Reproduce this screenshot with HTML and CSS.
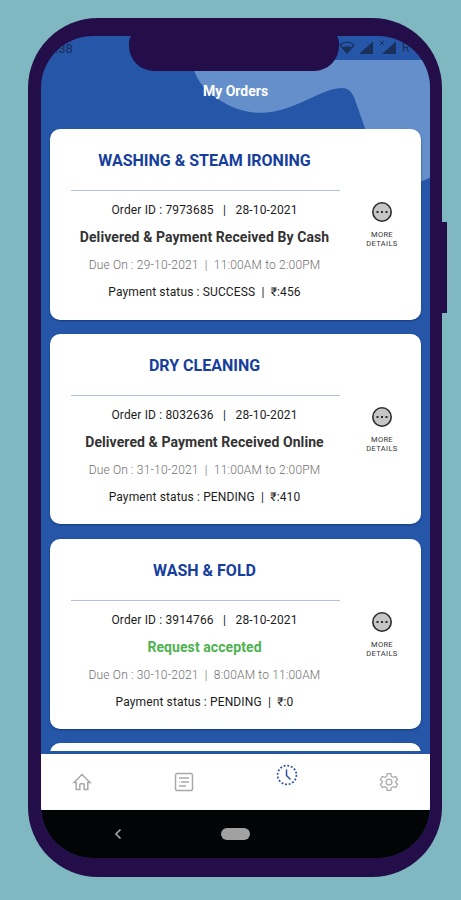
FILE: index.html
```html
<!DOCTYPE html>
<html lang="en">
<head>
    <meta charset="UTF-8">
    <title>My Orders</title>
    <link rel="stylesheet" href="styles.css">
</head>

<body>

<div class="phone">

    <div class="sideButton"></div>
    <div class="notch"></div>

    <div class="screen">

        <svg class="wave" width="389" height="160" viewBox="0 0 389 160">
            <path fill="#658fca" d="M150 24 C154 42 162 54 180 65 C204 80 228 80 254 69 C274 61 288 52 301 52 Q309 52 313 61 L325 95 V146 H378 Q384 144.500 389 141.500 V24 Z"/>
        </svg>

        <div class="statusbar">
            <span class="time">:38</span>
            <svg class="signals" width="62" height="16" viewBox="0 0 62 16">
                <path fill="none" stroke="#1a2f5a" stroke-width="1.2" d="M1 5 Q8 -1 15 5 L8 13 Z"/>
                <path fill="#1a2f5a" d="M3.500 7.500 Q8 5 12.500 7.500 L8 13 Z M20 14 L34 1.500 V14 Z M43 14 L57 1.500 V14 Z"/>
                <path fill="none" stroke="#1a2f5a" stroke-width="1" d="M41 1 L45 5 M45 1 L41 5"/>
            </svg>
            <span class="roaming">R</span>
        </div>

        <h1 class="header">My Orders</h1>

        <div class="orders">

            <div class="card">
                <div class="info">
                    <h2 class="service">WASHING &amp; STEAM IRONING</h2>
                    <p class="orderId">Order ID : 7973685 &nbsp; | &nbsp; 28-10-2021</p>
                    <p class="state">Delivered &amp; Payment Received By Cash</p>
                    <p class="due">Due On : 29-10-2021 &nbsp;|&nbsp; 11:00AM to 2:00PM</p>
                    <p class="payment">Payment status : SUCCESS &nbsp;|&nbsp; ₹:456</p>
                </div>
                <div class="more">
                    <svg width="22" height="22" viewBox="0 0 22 22">
                        <circle cx="11" cy="11" r="9.200" fill="#c6c6c6" stroke="#2b2b2b" stroke-width="1.600"/>
                        <path fill="#2b2b2b" d="M5.500 10h2v2h-2z M10 10h2v2h-2z M14.500 10h2v2h-2z"/>
                    </svg>
                    <span>MORE<br>DETAILS</span>
                </div>
            </div>

            <div class="card">
                <div class="info">
                    <h2 class="service">DRY CLEANING</h2>
                    <p class="orderId">Order ID : 8032636 &nbsp; | &nbsp; 28-10-2021</p>
                    <p class="state">Delivered &amp; Payment Received Online</p>
                    <p class="due">Due On : 31-10-2021 &nbsp;|&nbsp; 11:00AM to 2:00PM</p>
                    <p class="payment">Payment status : PENDING &nbsp;|&nbsp; ₹:410</p>
                </div>
                <div class="more">
                    <svg width="22" height="22" viewBox="0 0 22 22">
                        <circle cx="11" cy="11" r="9.200" fill="#c6c6c6" stroke="#2b2b2b" stroke-width="1.600"/>
                        <path fill="#2b2b2b" d="M5.500 10h2v2h-2z M10 10h2v2h-2z M14.500 10h2v2h-2z"/>
                    </svg>
                    <span>MORE<br>DETAILS</span>
                </div>
            </div>

            <div class="card">
                <div class="info">
                    <h2 class="service">WASH &amp; FOLD</h2>
                    <p class="orderId">Order ID : 3914766 &nbsp; | &nbsp; 28-10-2021</p>
                    <p class="state accepted">Request accepted</p>
                    <p class="due">Due On : 30-10-2021 &nbsp;|&nbsp; 8:00AM to 11:00AM</p>
                    <p class="payment">Payment status : PENDING &nbsp;|&nbsp; ₹:0</p>
                </div>
                <div class="more">
                    <svg width="22" height="22" viewBox="0 0 22 22">
                        <circle cx="11" cy="11" r="9.200" fill="#c6c6c6" stroke="#2b2b2b" stroke-width="1.600"/>
                        <path fill="#2b2b2b" d="M5.500 10h2v2h-2z M10 10h2v2h-2z M14.500 10h2v2h-2z"/>
                    </svg>
                    <span>MORE<br>DETAILS</span>
                </div>
            </div>

            <div class="card"></div>

        </div>

        <div class="tabs">
            <div class="tab">
                <svg width="20" height="20" viewBox="0 0 20 20">
                    <path d="M2 10.500 L10 2.500 L18 10.500 H15.800 V17.500 H12.200 V12.800 Q12.200 11.800 11.200 11.800 H8.800 Q7.800 11.800 7.800 12.800 V17.500 H4.200 V10.500 Z"/>
                </svg>
            </div>
            <div class="tab">
                <svg width="20" height="20" viewBox="0 0 20 20">
                    <rect x="1.500" y="1.500" width="17" height="17" rx="1.800"/>
                    <path d="M5 6 H15 M7 10 H15 M5 10 H5.600 M5 14 H12"/>
                </svg>
            </div>
            <div class="tab active">
                <svg width="22" height="22" viewBox="0 0 22 22">
                    <circle cx="11" cy="11" r="9.400" stroke-width="1.700" stroke-dasharray="1.900 1.792"/>
                    <path d="M10.500 5.500 V11.500 L14.500 15.500"/>
                </svg>
            </div>
            <div class="tab">
                <svg width="20" height="20" viewBox="0 0 24 24">
                    <path d="M9.800 2 H14.200 L14.800 5.200 L17 6.500 L20.100 5.400 L22.300 9.200 L19.900 11.300 V12.700 L22.300 14.800 L20.100 18.600 L17 17.500 L14.800 18.800 L14.200 22 H9.800 L9.200 18.800 L7 17.500 L3.900 18.600 L1.700 14.800 L4.100 12.700 V11.300 L1.700 9.200 L3.900 5.400 L7 6.500 L9.200 5.200 Z"/>
                    <circle cx="12" cy="12" r="3.500"/>
                </svg>
            </div>
        </div>

        <div class="navbar">
            <svg class="back" width="8" height="12" viewBox="0 0 8 12">
                <path fill="none" stroke="#a4a4a4" stroke-width="1.700" d="M6.500 1.500 L2 6 L6.500 10.500"/>
            </svg>
            <div class="homePill"></div>
        </div>

    </div>

</div>

</body>
</html>
```

FILE: styles.css
```css
body {
    margin: 0;
    height: 900px;
    overflow: hidden;
    background-color: #7fb8c1;
    font-family: Roboto, Arial, sans-serif;
}

h1, h2, p {
    margin: 0;
}

.phone {
    position: relative;
    box-sizing: border-box;
    width: 414px;
    height: 859px;
    margin: 18px 0 0 28px;
    padding: 18px 12px 19px 13px;
    background-color: #240e49;
    border-radius: 70px;
}

.sideButton {
    position: absolute;
    left: 412px;
    top: 204px;
    width: 7px;
    height: 91px;
    background-color: #240e49;
}

.notch {
    position: absolute;
    z-index: 2;
    left: 101px;
    top: 14px;
    width: 210px;
    height: 39px;
    background-color: #240e49;
    border-radius: 10px 10px 25px 25px;
}

.screen {
    position: relative;
    display: flex;
    flex-direction: column;
    height: 822px;
    overflow: hidden;
    background-color: #2656a7;
    border-radius: 52px;
}

.wave {
    position: absolute;
    left: 0;
    top: 0;
}

.statusbar {
    position: relative;
    display: flex;
    align-items: center;
    height: 24px;
    color: #1a2f5a;
    font-size: 13px;
}

.time {
    width: 298px;
    padding-left: 14px;
    box-sizing: border-box;
}

.roaming {
    margin-left: 1px;
    font-size: 12px;
}

.header {
    position: relative;
    height: 69px;
    line-height: 62px;
    text-align: center;
    color: white;
    font-size: 14px;
    font-weight: bold;
}

.orders {
    position: relative;
    display: flex;
    flex-direction: column;
    gap: 14.300px;
    height: 622px;
    margin-bottom: 3px;
    padding: 0 9px;
    overflow: hidden;
}

.card {
    display: flex;
    flex-shrink: 0;
    box-sizing: border-box;
    height: 190.500px;
    padding-left: 21px;
    background-color: white;
    border-radius: 10px;
    box-shadow: 0 1px 2px #123b83;
}

.info {
    flex: none;
    width: 269px;
    text-align: center;
    white-space: nowrap;
    color: #1c1c1c;
}

.info p, .service {
    padding-right: 2px;
}

.service {
    height: 62px;
    box-sizing: border-box;
    line-height: 64px;
    border-bottom: 1px solid #b4c1df;
    color: #163e9d;
    font-size: 16px;
    font-weight: bold;
}

.orderId {
    height: 38px;
    line-height: 38px;
    font-size: 12px;
    letter-spacing: 0.150px;
}

.state {
    height: 17px;
    line-height: 16px;
    color: #333;
    font-size: 14px;
    font-weight: bold;
    letter-spacing: 0.080px;
}

.accepted {
    color: #4db34f;
}

.due {
    height: 39px;
    line-height: 39px;
    color: #707070;
    font-size: 12px;
    font-weight: 300;
    letter-spacing: 0.170px;
}

.payment {
    height: 14px;
    line-height: 14px;
    font-size: 12px;
    letter-spacing: 0.130px;
}

.more {
    display: flex;
    flex: none;
    flex-direction: column;
    align-items: center;
    width: 84px;
    padding-top: 72px;
    text-align: center;
    color: #333;
    font-size: 7.500px;
    letter-spacing: 0.350px;
    line-height: 9px;
}

.more span {
    margin-top: 7px;
}

.tabs {
    position: relative;
    display: flex;
    height: 56px;
    background-color: white;
}

.tab {
    display: flex;
    flex: none;
    align-items: center;
    justify-content: center;
    width: 102.500px;
}

.tab:first-child {
    margin-left: -10.750px;
}

.tab svg {
    fill: none;
    stroke: #a9a9a9;
    stroke-width: 1.500;
}

.tab.active {
    padding-bottom: 15px;
    box-sizing: border-box;
}

.tab.active svg {
    stroke: #2b51a5;
}

.navbar {
    position: relative;
    display: flex;
    align-items: center;
    flex: 1;
    background-color: #030405;
}

.back {
    margin-left: 73px;
}

.homePill {
    width: 29px;
    height: 12px;
    margin-left: 99px;
    background-color: #a1a1a1;
    border-radius: 6px;
}
```
